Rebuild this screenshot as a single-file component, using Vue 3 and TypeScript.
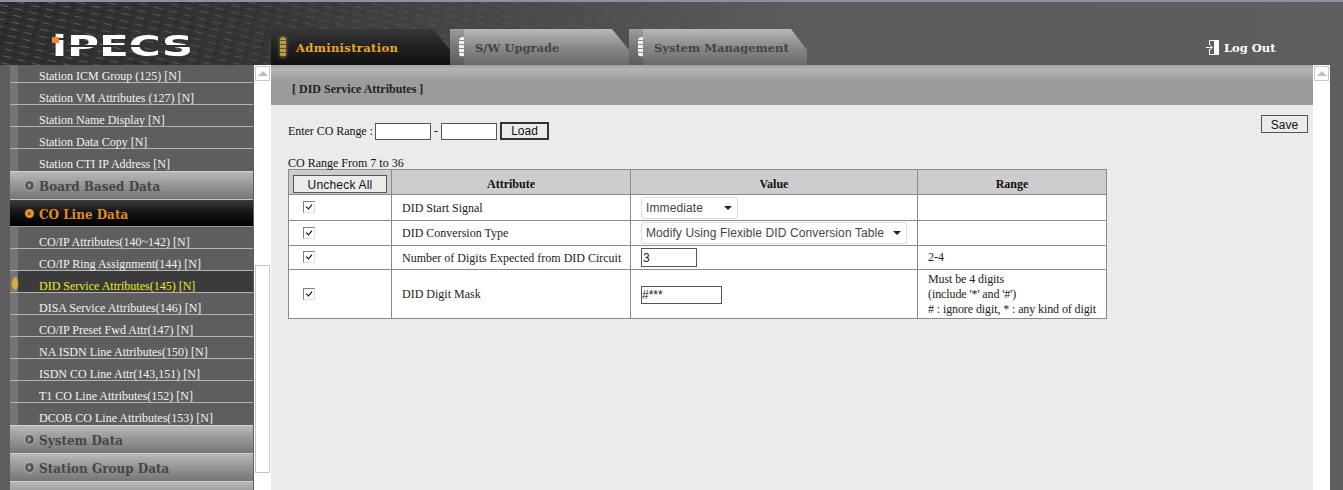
<script setup lang="ts">
interface Row { label: string; active?: boolean }
const topRows: Row[] = [
  { label: 'Station ICM Group (125) [N]' },
  { label: 'Station VM Attributes (127) [N]' },
  { label: 'Station Name Display [N]' },
  { label: 'Station Data Copy [N]' },
  { label: 'Station CTI IP Address [N]' },
]
const coRows: Row[] = [
  { label: 'CO/IP Attributes(140~142) [N]' },
  { label: 'CO/IP Ring Assignment(144) [N]' },
  { label: 'DID Service Attributes(145) [N]', active: true },
  { label: 'DISA Service Attributes(146) [N]' },
  { label: 'CO/IP Preset Fwd Attr(147) [N]' },
  { label: 'NA ISDN Line Attributes(150) [N]' },
  { label: 'ISDN CO Line Attr(143,151) [N]' },
  { label: 'T1 CO Line Attributes(152) [N]' },
  { label: 'DCOB CO Line Attributes(153) [N]' },
]
</script>

<template>
  <div class="page">
    <header class="top">
      <svg class="texture" width="720" height="63" aria-hidden="true">
        <defs>
          <pattern id="dash" width="15" height="7" patternUnits="userSpaceOnUse" patternTransform="rotate(14)">
            <rect x="1" y="2" width="8" height="1" fill="#ffffff" opacity="0.24" />
            <rect x="9" y="5" width="4" height="1" fill="#000000" opacity="0.35" />
          </pattern>
          <linearGradient id="fade" x1="0" x2="1" y1="0" y2="0">
            <stop offset="0" stop-color="#fff" stop-opacity="1" />
            <stop offset="0.4" stop-color="#fff" stop-opacity="0.5" />
            <stop offset="1" stop-color="#fff" stop-opacity="0" />
          </linearGradient>
          <mask id="fadeMask"><rect width="720" height="63" fill="url(#fade)" /></mask>
        </defs>
        <rect width="720" height="63" fill="url(#dash)" mask="url(#fadeMask)" />
      </svg>

      <div class="logo"><span class="logo-text">iPECS</span><i class="logo-dot"></i><i class="logo-cut"></i></div>

      <nav class="tabs">
        <div class="tab tab-on">
          <span class="grip grip-gold"></span>
          <span>Administration</span>
        </div>
        <div class="tab tab-off">
          <span class="grip"></span>
          <span>S/W Upgrade</span>
        </div>
        <div class="tab tab-off tab-sys">
          <span class="grip"></span>
          <span>System Management</span>
        </div>
      </nav>

      <div class="logout">
        <svg width="13" height="17" viewBox="0 0 13 17" aria-hidden="true">
          <path d="M3.5 1.5H12.5V15.5H3.5V10M3.5 6V1.5" fill="none" stroke="#fff" stroke-width="1" />
          <path d="M8 2L12.5 1V16L8 15Z" fill="#fff" />
          <path d="M0 8.5H6M4 6.5L6.5 8.5L4 10.5" fill="none" stroke="#fff" stroke-width="1" />
        </svg>
        <span>Log Out</span>
      </div>
    </header>

    <div class="body">
      <aside class="side">
        <div class="menu">
          <div class="list list-first">
            <div v-for="r in topRows" :key="r.label" class="row">{{ r.label }}</div>
          </div>
          <div class="group"><i class="dot"></i>Board Based Data</div>
          <div class="group group-on"><i class="dot"></i>CO Line Data</div>
          <div class="list">
            <div v-for="r in coRows" :key="r.label" class="row" :class="{ 'row-on': r.active }">{{ r.label }}</div>
          </div>
          <div class="group"><i class="dot"></i>System Data</div>
          <div class="group"><i class="dot"></i>Station Group Data</div>
          <div class="group"></div>
        </div>
        <div class="bar bar-side">
          <div class="bar-up"><i></i></div>
          <div class="bar-thumb"></div>
        </div>
      </aside>

      <main class="main">
        <div class="band">[ DID Service Attributes ]</div>
        <div class="content">
          <div class="toolbar">
            <div class="range">
              <span class="range-label">Enter CO Range :</span>
              <input class="inp inp-range" type="text" />
              <span class="range-dash">-</span>
              <input class="inp inp-range" type="text" />
              <button class="btn btn-load" type="button">Load</button>
            </div>
            <button class="btn btn-save" type="button">Save</button>
          </div>
          <div class="caption">CO Range From 7 to 36</div>
          <table class="grid">
            <colgroup>
              <col class="c1" /><col class="c2" /><col class="c3" /><col class="c4" />
            </colgroup>
            <thead>
              <tr class="h-head">
                <th class="th-btn"><button class="btn btn-all" type="button">Uncheck All</button></th>
                <th>Attribute</th>
                <th>Value</th>
                <th>Range</th>
              </tr>
            </thead>
            <tbody>
              <tr class="h-first">
                <td class="chk"><input class="box" type="checkbox" checked /></td>
                <td class="attr">DID Start Signal</td>
                <td class="val">
                  <div class="sel sel-a">
                    <select><option>Immediate</option></select>
                  </div>
                </td>
                <td class="rng"></td>
              </tr>
              <tr class="h-a">
                <td class="chk"><input class="box" type="checkbox" checked /></td>
                <td class="attr">DID Conversion Type</td>
                <td class="val">
                  <div class="sel sel-b">
                    <select><option>Modify Using Flexible DID Conversion Table</option></select>
                  </div>
                </td>
                <td class="rng"></td>
              </tr>
              <tr class="h-b">
                <td class="chk"><input class="box" type="checkbox" checked /></td>
                <td class="attr">Number of Digits Expected from DID Circuit</td>
                <td class="val"><input class="inp inp-digits" type="text" value="3" /></td>
                <td class="rng">2-4</td>
              </tr>
              <tr class="h-c">
                <td class="chk"><input class="box" type="checkbox" checked /></td>
                <td class="attr">DID Digit Mask</td>
                <td class="val"><input class="inp inp-mask" type="text" value="#***" /></td>
                <td class="rng rng-tight">Must be 4 digits<br />(include '*' and '#')<br /># : ignore digit, * : any kind of digit</td>
              </tr>
            </tbody>
          </table>
        </div>
      </main>

      <div class="bar bar-main">
        <div class="bar-up"><i></i></div>
      </div>
    </div>
  </div>
</template>

<style>
html, body { margin: 0; background: #5e5e5e; }
</style>

<style scoped>
.page {
  width: 1343px;
  height: 490px;
  overflow: hidden;
  display: flex;
  flex-direction: column;
  background: #5e5e5e;
  font-family: "Liberation Serif", serif;
  font-size: 12px;
  color: #111;
}
.top {
  position: relative;
  flex: 0 0 65px;
  box-sizing: border-box;
  height: 65px;
  border-top: 2px solid #8b929a;
  display: flex;
  align-items: flex-end;
  background: linear-gradient(90deg, #2e2e2e 0, #363636 260px, #454545 440px, #5c5c5c 800px, #5e5e5e 100%);
}
.texture { position: absolute; left: 0; top: 0; }
.logo {
  position: absolute;
  left: 52px;
  top: 35px;
  width: 139px;
  height: 20px;
}
.logo-text {
  position: absolute;
  left: 0;
  top: -7px;
  font-family: "DejaVu Sans", sans-serif;
  font-weight: 700;
  font-size: 28px;
  line-height: 33px;
  color: #fff;
  transform-origin: left top;
  transform: scaleX(1.56);
}
.logo-dot {
  position: absolute;
  left: 0;
  top: 0;
  width: 7px;
  height: 6px;
  background: #f08a2a;
}
.logo-cut {
  position: absolute;
  left: 18px;
  top: 8px;
  width: 121px;
  height: 2px;
  background: #333;
}
.tabs {
  position: relative;
  margin-left: 271px;
  display: flex;
  height: 36px;
}
.tab {
  position: relative;
  box-sizing: border-box;
  width: 179px;
  height: 36px;
  display: flex;
  align-items: center;
  padding: 2px 0 0 25px;
  font-family: "DejaVu Serif", serif;
  font-weight: 700;
  font-size: 11.5px;
  clip-path: polygon(0 0, 162px 0, 100% 21px, 100% 100%, 0 100%);
}
.tab-on {
  color: #e8a823;
  letter-spacing: 0.35px;
  background: linear-gradient(180deg, #373737 0, #1d1d1d 60%, #111 100%);
}
.tab-off {
  color: #444;
  background: linear-gradient(180deg, #b8b8b8 0, #8a8a8a 50%, #6a6a6a 100%);
  box-shadow: inset 14px 0 0 rgba(0, 0, 0, 0.14);
}
.tab-sys { width: 178px; }
.grip {
  position: absolute;
  left: 5px;
  top: 8px;
  width: 8px;
  height: 20px;
  border-radius: 4px;
  background: repeating-linear-gradient(180deg, #f2f2f2 0 3px, #8c8c8c 3px 4px);
  filter: blur(0.5px);
}
.tab-off .grip { left: 9px; width: 5px; border-radius: 4px 0 0 4px; }
.grip-gold {
  left: 9px;
  width: 6px;
  background: repeating-linear-gradient(180deg, #b89c50 0 3px, #6a5520 3px 4px);
  box-shadow: 0 0 3px 1px rgba(190, 160, 70, 0.45);
}
.logout {
  position: absolute;
  left: 1206px;
  top: 37px;
  display: flex;
  align-items: center;
  gap: 5px;
  font-family: "DejaVu Serif", serif;
  font-weight: 700;
  font-size: 11.5px;
  color: #fff;
}
.body {
  flex: 1;
  display: flex;
  min-height: 0;
}
.side {
  flex: 0 0 271px;
  box-sizing: border-box;
  padding-left: 10px;
  display: flex;
  overflow: hidden;
}
.menu {
  flex: 0 0 243px;
  background: #5e5e5e;
}
.list-first { margin-top: -4px; }
.row {
  box-sizing: border-box;
  height: 22px;
  padding: 8px 0 0 29px;
  line-height: 14px;
  color: #f2f2f2;
  font-size: 12px;
  white-space: nowrap;
  border-bottom: 1px solid #b4b4b4;
  background: linear-gradient(90deg, #747474 0 8px, #5e5e5e 8px);
}
.list .row:last-child { border-bottom: 0; }
.row-on {
  color: #e8ea2c;
  background: radial-gradient(ellipse 4px 8px at 5px 60%, #d9ad3c 0 55%, transparent 100%) no-repeat, linear-gradient(90deg, #747474 0 8px, #3b3b3b 8px);
}
.group {
  box-sizing: border-box;
  height: 28px;
  padding: 3px 0 0 29px;
  position: relative;
  display: flex;
  align-items: center;
  font-family: "DejaVu Serif", serif;
  font-weight: 700;
  font-size: 12px;
  color: #464646;
  background: linear-gradient(180deg, #b8b8b8 0, #989898 45%, #767676 100%);
  border-top: 1px solid #d0d0d0;
}
.group-on {
  color: #e08a22;
  background: linear-gradient(180deg, #3c3c3c 0, #161616 45%, #000 100%);
  border-top: 1px solid #c4c4c4;
  border-bottom: 1px solid #9a9a9a;
}
.dot {
  position: absolute;
  left: 15px;
  top: 9px;
  width: 9px;
  height: 9px;
  border-radius: 50%;
  background: #5a5a5a;
  box-shadow: 0 0 1px 1px rgba(255, 255, 255, 0.25);
}
.dot::after {
  content: "";
  position: absolute;
  left: 2px;
  top: 3px;
  width: 2px;
  height: 2px;
  border-top: 1px solid #ddd;
  border-right: 1px solid #ddd;
  transform: rotate(45deg);
}
.group-on .dot { background: #e8941e; box-shadow: none; }
.group-on .dot::after { border-color: #222; }
.bar {
  box-sizing: border-box;
  background: #fff;
  position: relative;
}
.bar-side {
  flex: 0 0 17px;
  margin-left: 1px;
  padding: 1px 1px 0 1px;
}
.bar-main {
  flex: 0 0 17px;
  padding: 1px 1px 0 1px;
}
.bar-up {
  box-sizing: border-box;
  width: 15px;
  height: 15px;
  border: 1px solid #c8c8c8;
  display: flex;
  align-items: center;
  justify-content: center;
}
.bar-up i {
  width: 0;
  height: 0;
  border-left: 5px solid transparent;
  border-right: 5px solid transparent;
  border-bottom: 5px solid #bdbdbd;
}
.bar-thumb {
  box-sizing: border-box;
  width: 15px;
  height: 208px;
  margin-top: 184px;
  border: 1px solid #c4c4c4;
  background: #fff;
}
.main {
  flex: 0 0 1042px;
  display: flex;
  flex-direction: column;
  background: #ebebeb;
}
.band {
  flex: 0 0 40px;
  box-sizing: border-box;
  padding: 17px 0 0 21px;
  line-height: 14px;
  font-weight: 700;
  font-size: 12px;
  color: #222;
  background: linear-gradient(180deg, #a2a2a2 0, #b4b4b4 4px, #9c9c9c 16px, #9a9a9a 100%);
}
.content {
  flex: 1;
  box-sizing: border-box;
  padding: 10px 5px 0 17px;
}
.toolbar {
  display: flex;
  justify-content: space-between;
  align-items: flex-start;
}
.range {
  display: flex;
  align-items: center;
  margin-top: 7px;
  height: 18px;
}
.range-label { width: 87px; letter-spacing: -0.05px; }
.range-dash { width: 10px; text-align: center; }
.inp {
  box-sizing: border-box;
  border: 1px solid #555;
  background: #fff;
  font-family: "Liberation Sans", sans-serif;
  font-size: 12px;
  padding: 0 1px;
  margin: 0;
  outline: none;
  color: #222;
  border-radius: 0;
}
.inp-range { width: 56px; height: 17px; }
.btn {
  box-sizing: border-box;
  margin: 0;
  padding: 2px 0 0;
  background: #ebebeb;
  font-family: "Liberation Sans", sans-serif;
  font-size: 12px;
  color: #111;
  border: 1px solid #555;
  border-radius: 0;
}
.btn-load {
  width: 49px;
  height: 18px;
  margin-left: 3px;
  padding-top: 0;
  border: 2px solid #333;
}
.btn-save { width: 47px; height: 18px; }
.caption {
  margin-top: 16px;
  height: 13px;
  line-height: 14px;
}
.grid {
  table-layout: fixed;
  border-collapse: collapse;
  width: 819px;
  background: #fff;
}
.c1 { width: 103px; }
.c2 { width: 239px; }
.c3 { width: 287px; }
.c4 { width: 189px; }
.grid th, .grid td {
  border: 1px solid #8a8a8a;
  padding: 0;
  font-size: 12px;
}
.grid th { background: #cdcdcd; font-weight: 700; color: #111; padding-top: 5px; }
.grid th.th-btn { padding-top: 0; vertical-align: top; }
.h-head { height: 25px; }
.h-first { height: 26px; }
.h-a { height: 25px; }
.h-b { height: 24px; }
.h-c { height: 49px; }
.btn-all {
  display: block;
  width: 94px;
  height: 18px;
  margin: 5px 0 0 4px;
  letter-spacing: 0.2px;
  background: #ebebeb;
}
.chk { padding-left: 14px !important; }
.box {
  appearance: none;
  display: block;
  position: relative;
  box-sizing: border-box;
  width: 12px;
  height: 12px;
  margin: 0 0 1px;
  background: #fff;
  border: 1px solid #808080;
  border-right-color: #ddd;
  border-bottom-color: #ddd;
}
.box::after {
  content: "";
  position: absolute;
  left: 3px;
  top: 1px;
  width: 3px;
  height: 5px;
  border-right: 1px solid #000;
  border-bottom: 1px solid #000;
  transform: rotate(40deg);
}
.attr { padding-left: 10px !important; padding-top: 1px !important; color: #222; }
.val { padding-left: 10px !important; }
.rng { padding-left: 10px !important; color: #222; line-height: 15px; }
.rng-tight { letter-spacing: -0.1px; }
.sel { position: relative; }
.sel select {
  appearance: none;
  display: block;
  width: 100%;
  height: 22px;
  box-sizing: border-box;
  border: 1px solid #dcdcdc;
  border-radius: 2px;
  background: #fff;
  padding: 0 0 0 4px;
  margin: 0;
  font-family: "Liberation Sans", sans-serif;
  font-size: 12px;
  letter-spacing: 0.1px;
  color: #444;
  outline: none;
}
.sel::after {
  content: "";
  position: absolute;
  right: 6px;
  top: 9px;
  width: 0;
  height: 0;
  border-left: 4px solid transparent;
  border-right: 4px solid transparent;
  border-top: 4px solid #222;
  pointer-events: none;
}
.sel-a { width: 97px; }
.sel-b { width: 266px; }
.inp-digits { width: 56px; height: 19px; display: block; }
.inp-mask { width: 81px; height: 18px; display: block; padding: 0; margin-top: 1px; }
</style>
